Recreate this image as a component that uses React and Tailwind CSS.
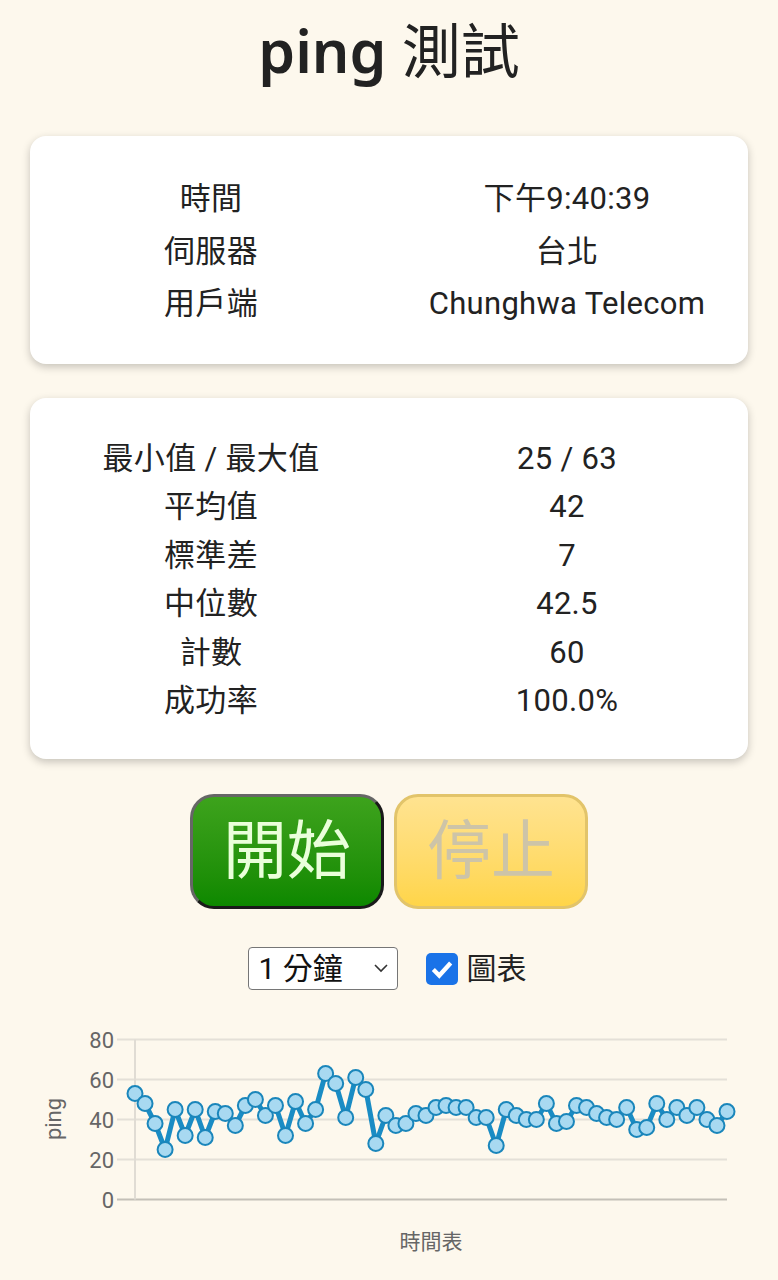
import React, { useState } from 'react';

const pings = [
  53, 48, 38, 25, 45, 32, 45, 31, 44, 43,
  37, 47, 50, 42, 47, 32, 49, 38, 45, 63,
  58, 41, 61, 55, 28, 42, 37, 38, 43, 42,
  46, 47, 46, 46, 41, 41, 27, 45, 42, 40,
  40, 48, 38, 39, 47, 46, 43, 41, 40, 46,
  35, 36, 48, 40, 46, 42, 46, 40, 37, 44,
];

const infoRows = [
  ['時間', '下午9:40:39'],
  ['伺服器', '台北'],
  ['用戶端', 'Chunghwa Telecom'],
];

const statRows = [
  ['最小值 / 最大值', '25 / 63'],
  ['平均值', '42'],
  ['標準差', '7'],
  ['中位數', '42.5'],
  ['計數', '60'],
  ['成功率', '100.0%'],
];

const Card = ({ rows, rowClass }) => (
  <div className="mx-[30px] rounded-2xl bg-white pt-[37px] pb-[33px] shadow-[0_3px_8px_rgba(0,0,0,0.22)]">
    {rows.map(([label, value]) => (
      <div key={label} className={`grid grid-cols-2 px-[3px] text-center text-[31px] tracking-[0.3px] text-[#222] ${rowClass}`}>
        <div>{label}</div>
        <div>{value}</div>
      </div>
    ))}
  </div>
);

const PingChart = () => {
  const x0 = 135;
  const step = (727 - 135) / 59;
  const y = (v) => 188.5 - v * 2;
  const pts = pings.map((v, i) => [x0 + i * step, y(v)]);
  const line = pts.map(([px, py]) => `${px.toFixed(1)},${py}`).join(' ');
  return (
    <svg width="778" height="260" viewBox="0 0 778 260" className="block">
      {[0, 20, 40, 60, 80].map((t) => (
        <g key={t}>
          <line x1="117" x2="727" y1={y(t)} y2={y(t)} stroke={t === 0 ? '#c4c0b8' : '#e4e0d8'} strokeWidth="2" />
          <text x="114" y={y(t) + 8} textAnchor="end" fontSize="22" fill="#666" fontFamily="Roboto, sans-serif">{t}</text>
        </g>
      ))}
      <line x1="135" x2="135" y1="28.5" y2="188.5" stroke="#e0dcd4" strokeWidth="2" />
      <text x="0" y="0" transform="translate(61 108) rotate(-90)" textAnchor="middle" fontSize="22" fill="#666" fontFamily="Roboto, sans-serif">ping</text>
      <text x="431" y="238" textAnchor="middle" fontSize="21" fill="#666" fontFamily="'Noto Sans CJK TC', sans-serif">時間表</text>
      <polyline points={line} fill="none" stroke="#1a8cc4" strokeWidth="5" strokeLinejoin="round" />
      {pts.map(([px, py], i) => (
        <circle key={i} cx={px} cy={py} r="7.5" fill="#a8d9f1" stroke="#1a86bb" strokeWidth="2" />
      ))}
    </svg>
  );
};

export default function App() {
  const [range, setRange] = useState('1');
  const [showChart, setShowChart] = useState(true);

  return (
    <div className="min-h-screen bg-[#fdf8ed] pt-5 font-['Roboto','Noto_Sans_CJK_TC',sans-serif]">
      <h1 className="text-center text-[59px] leading-[60px] text-[#222] font-['Noto_Sans','Noto_Sans_CJK_TC',sans-serif]">
        <span className="font-semibold">ping</span> <span className="font-normal">測試</span>
      </h1>

      <div className="mt-[56px]">
        <Card rows={infoRows} rowClass="leading-[52.5px]" />
      </div>
      <div className="mt-[34px]">
        <Card rows={statRows} rowClass="leading-[48.6px]" />
      </div>

      <div className="mt-[35px] flex justify-center gap-[10px]">
        <button className="flex h-[115px] w-[194px] items-center justify-center rounded-[24px] border-[3px] border-t-[#666] border-l-[#666] border-r-[#1a1a1a] border-b-[#1a1a1a] bg-gradient-to-b from-[#3da31c] to-[#0c8800] text-[64px] text-[#eaffda]">
          開始
        </button>
        <button disabled className="flex h-[115px] w-[194px] items-center justify-center rounded-[24px] border-[3px] border-[#e2c46a] bg-gradient-to-b from-[#ffe390] to-[#ffd548] text-[64px] text-[#cdc4a8]">
          停止
        </button>
      </div>

      <div className="mt-[37px] flex items-center justify-center gap-[28px] pr-[4px]">
        <div className="relative">
          <select
            value={range}
            onChange={(e) => setRange(e.target.value)}
            className="h-[43px] w-[150px] appearance-none rounded-[4px] border border-[#767676] bg-white pl-[10px] text-[30px] leading-[40px] text-[#111]"
          >
            <option value="1">1 分鐘</option>
            <option value="5">5 分鐘</option>
          </select>
          <svg className="pointer-events-none absolute right-[10px] top-[16px]" width="14" height="10" viewBox="0 0 14 10">
            <path d="M1 2 L7 8 L13 2" fill="none" stroke="#333" strokeWidth="1.6" />
          </svg>
        </div>
        <label className="flex items-center gap-[9px] text-[30px] text-[#222]" onClick={() => setShowChart(!showChart)}>
          <span className={`flex h-[32px] w-[32px] items-center justify-center rounded-[5px] ${showChart ? 'bg-[#1a73e8]' : 'border-2 border-[#767676] bg-white'}`}>
            {showChart && (
              <svg width="26" height="26" viewBox="0 0 24 24">
                <path d="M4 12.5 L9.5 18 L20 6.5" fill="none" stroke="white" strokeWidth="4" />
              </svg>
            )}
          </span>
          圖表
        </label>
      </div>

      <div className="mt-[20px] pb-5">{showChart && <PingChart />}</div>
    </div>
  );
}
